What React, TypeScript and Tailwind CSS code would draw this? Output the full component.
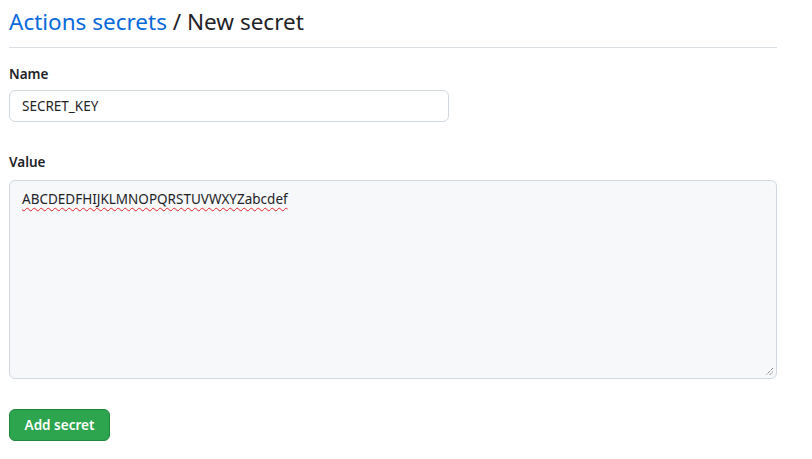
import React from "react"

const App: React.FC = () => {
  return (
    <div
      className="min-h-screen bg-white px-[9px] pt-[5px] text-[#1f2328]"
      style={{ fontFamily: '"Noto Sans", "Open Sans", sans-serif' }}
    >
      <div className="w-[768px]">
        <h1 className="border-b border-[#d8dee4] pb-[8px] text-[22.5px] font-normal leading-[34px]">
          <a className="text-[#0969da]">Actions secrets</a> / New secret
        </h1>

        <div className="mt-[16px]">
          <label className="block text-[13.5px] font-semibold leading-[20px]">Name</label>
          <div className="mt-[6px] flex h-[32px] w-[440px] items-center rounded-[6px] border border-[#d0d7de] bg-white px-[12px] text-[13.5px]">
            SECRET_KEY
          </div>
        </div>

        <div className="mt-[30px]">
          <label className="block text-[13.5px] font-semibold leading-[20px]">Value</label>
          <div className="relative mt-[8px] h-[199px] w-full rounded-[6px] border border-[#d0d7de] bg-[#f6f8fa] px-[12px] py-[8px] text-[13.5px] leading-[20px]">
            <span className="underline decoration-[#e5212a] decoration-wavy decoration-1 underline-offset-[3px]">
              ABCDEDFHIJKLMNOPQRSTUVWXYZabcdef
            </span>
            <svg className="absolute bottom-[2px] right-[2px]" width="9" height="9" viewBox="0 0 9 9">
              <path d="M8 1 L1 8 M8 4.5 L4.5 8" stroke="#555" strokeWidth="1" strokeDasharray="1 1" />
            </svg>
          </div>
        </div>

        <button className="mt-[30px] h-[32px] w-[101px] rounded-[6px] border border-[#1f883d] bg-[#2da44e] text-[13.5px] font-semibold text-white">
          Add secret
        </button>
      </div>
    </div>
  )
}

export default App
